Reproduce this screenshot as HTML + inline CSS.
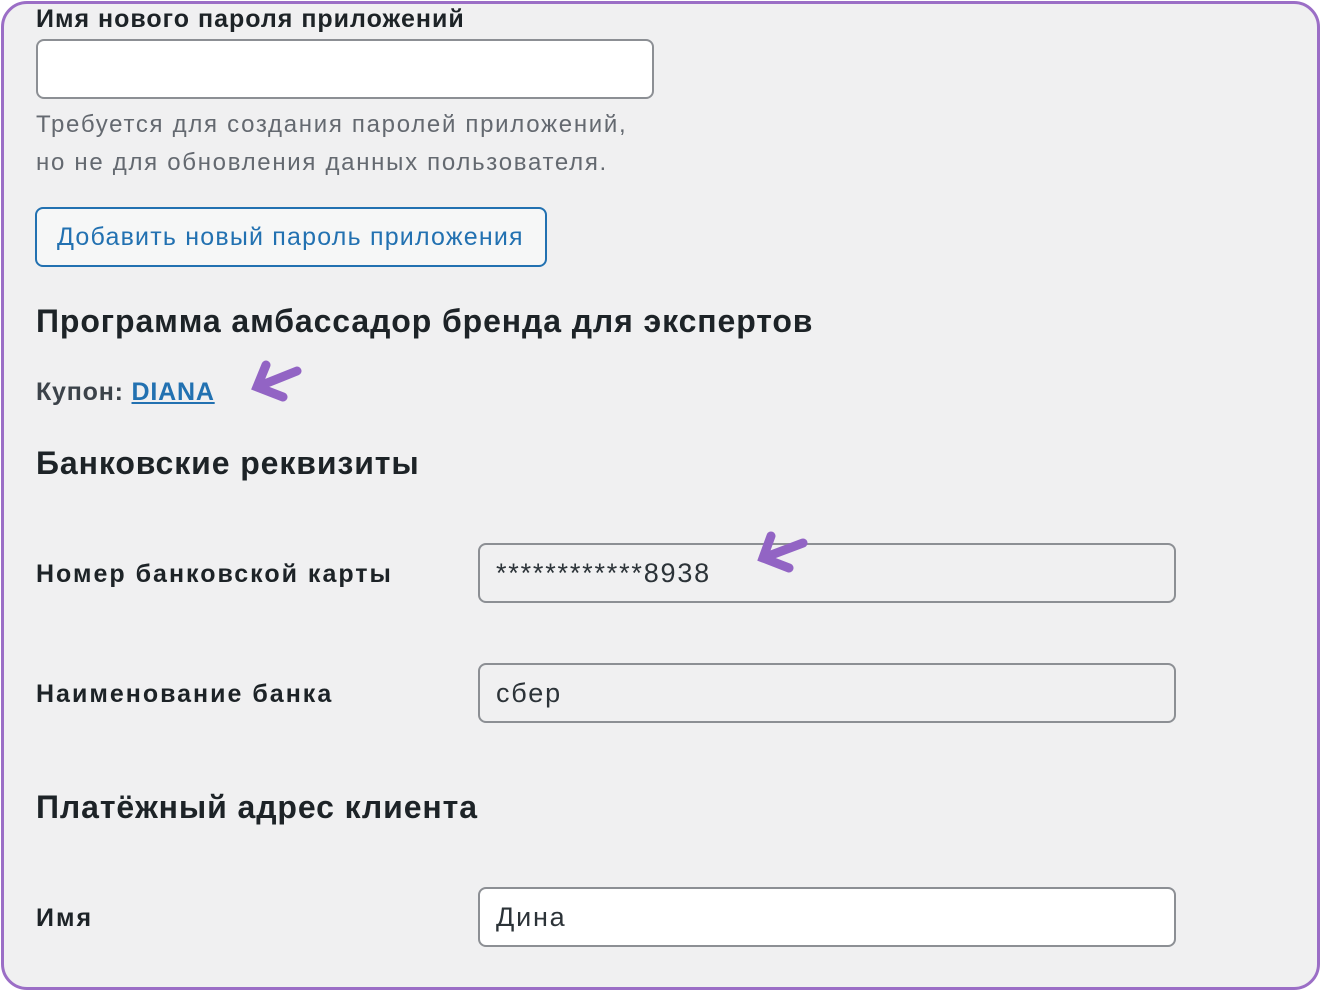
<html><head><style>
body{margin:0;width:1320px;height:990px;background:#fff;font-family:"Liberation Sans",sans-serif;overflow:hidden}
.frame{position:absolute;left:1px;top:1px;width:1313px;height:983px;border:3px solid #9b6ec6;border-radius:26px;background:#f0f0f1;overflow:hidden}
.a{position:absolute;white-space:nowrap}
.lbl{font-weight:bold;font-size:25px;color:#1d2327;letter-spacing:2px}
.h{font-weight:bold;font-size:32px;color:#1d2327;letter-spacing:0.9px}
.inp{position:absolute;border:2px solid #8c8f94;border-radius:8px;box-sizing:border-box;font-size:27px;color:#2c3338;padding-left:16px;display:flex;align-items:center;letter-spacing:1.8px}
</style></head><body>
<div class="frame">
<div class="a lbl" style="left:32px;top:1px;letter-spacing:1px">Имя нового пароля приложений</div>
<div class="inp" style="left:32px;top:35px;width:618px;height:60px;background:#fff"></div>
<div class="a" style="left:32px;top:102px;font-size:24px;color:#646970;line-height:38px;letter-spacing:1.7px">Требуется для создания паролей приложений,<br>но не для обновления данных пользователя.</div>
<div class="inp" style="left:31px;top:203px;width:512px;height:60px;border-color:#2271b1;color:#2271b1;background:#f6f7f7;font-size:25px;padding-left:20px;letter-spacing:1.2px">Добавить новый пароль приложения</div>
<div class="a h" style="left:32px;top:299px">Программа амбассадор бренда для экспертов</div>
<div class="a lbl" style="left:32px;top:374px;color:#3c434a;letter-spacing:0.8px">Купон: <span style="color:#2271b1;text-decoration:underline">DIANA</span></div>
<div class="a h" style="left:32px;top:441px">Банковские реквизиты</div>
<div class="a lbl" style="left:32px;top:556px">Номер банковской карты</div>
<div class="inp" style="left:474px;top:539px;width:698px;height:60px">************8938</div>
<div class="a lbl" style="left:32px;top:676px">Наименование банка</div>
<div class="inp" style="left:474px;top:659px;width:698px;height:60px">сбер</div>
<div class="a h" style="left:32px;top:785px">Платёжный адрес клиента</div>
<div class="a lbl" style="left:32px;top:900px">Имя</div>
<div class="inp" style="left:474px;top:883px;width:698px;height:60px;background:#fff">Дина</div>
</div>
<svg style="position:absolute;left:0;top:0" width="1320" height="990">
<g stroke="#9264c4" stroke-width="9" stroke-linecap="round" fill="none">
<path d="M297 371L257 387M266 365L257 387L283 397"/>
<path d="M803 543L763 558M771 536L763 558L789 568"/>
</g></svg>
</body></html>
